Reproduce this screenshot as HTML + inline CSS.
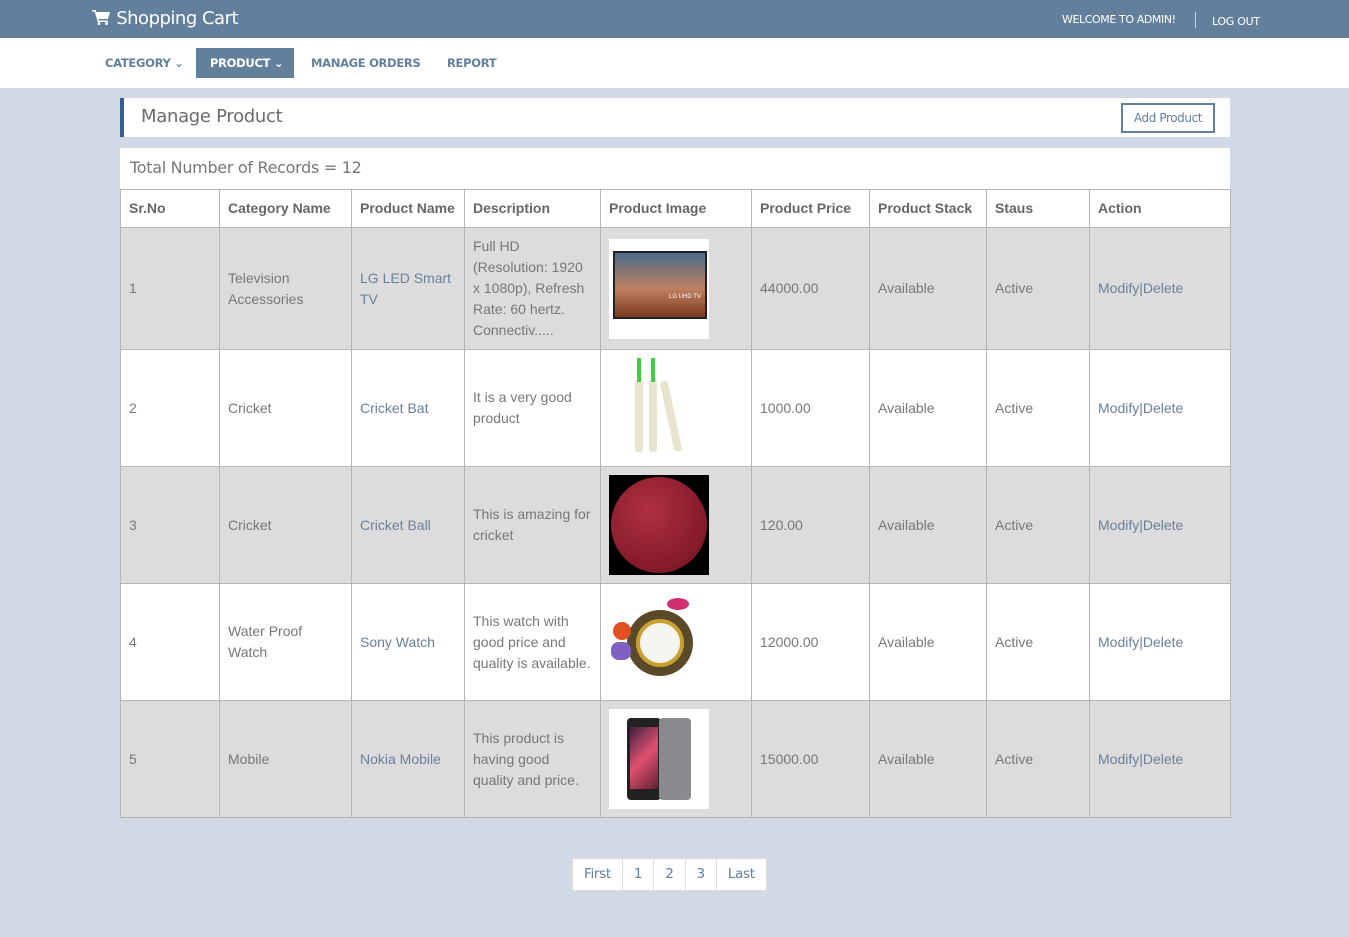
<!DOCTYPE html>
<html><head><meta charset="utf-8"><style>
*{margin:0;padding:0;box-sizing:border-box}
body{width:1349px;height:937px;background:#d3d8e7;font-family:"Liberation Sans",Arial,sans-serif;position:relative;overflow:hidden}
.top{position:absolute;left:0;top:0;width:1349px;height:38px;background:#62809c;color:#fff}
.brand{position:absolute;left:92px;top:8px;font-size:18px;font-family:"DejaVu Sans","Liberation Sans",sans-serif;letter-spacing:-0.5px}
.welc{position:absolute;left:1062px;top:13px;font-size:11px;font-family:"DejaVu Sans",sans-serif;letter-spacing:-0.4px}
.sep{position:absolute;left:1195px;top:12px;width:1px;height:16px;background:#c8d2dc}
.logout{position:absolute;left:1212px;top:15px;font-size:11px;font-family:"DejaVu Sans",sans-serif;letter-spacing:-0.3px}
.nav{position:absolute;left:0;top:38px;width:1349px;height:50px;background:#fff}
.nav span{position:absolute;top:18px;font-size:11.5px;font-weight:bold;color:#62809c;font-family:"DejaVu Sans",sans-serif;letter-spacing:-0.3px}
.nav .act{left:196px;top:10px;width:98px;height:30px;background:#62809c;color:#fff;padding:8px 0 0 14px}
.hd{position:absolute;left:120px;top:98px;width:1110px;height:39px;background:#fff;border-left:4px solid #2e5f90}
.hd h1{position:absolute;left:17px;top:8px;font-size:18px;font-weight:normal;color:#6b6b6b;font-family:"DejaVu Sans",sans-serif;letter-spacing:-0.3px}
.add{position:absolute;left:997px;top:5px;width:94px;height:30px;border:2px solid #62809c;color:#62809c;font-size:12px;text-align:center;line-height:26px;font-family:"DejaVu Sans",sans-serif;letter-spacing:-0.4px}
.tot{position:absolute;left:120px;top:148px;width:1110px;height:41px;background:#fff;color:#777;font-size:16px;padding:10px 0 0 10px;font-family:"DejaVu Sans",sans-serif;letter-spacing:-0.3px}
table{position:absolute;left:120px;top:189px;border-collapse:collapse;width:1110px;table-layout:fixed;font-size:14px;color:#777}
td,th{border:1px solid #b5b5b5;padding:0 8px;text-align:left;vertical-align:middle;line-height:21px}
th{height:38px;color:#666;font-weight:bold;background:#fff}
tr.g td{background:#dcdcdc}
tr.w td{background:#fff}
.b{color:#6a7f9a}
.img{width:100px;height:100px;position:relative;overflow:hidden}
.pg{position:absolute;left:572px;top:858px;height:33px;display:flex;background:#fff;border:1px solid #ddd}
.pg span{border-left:1px solid #ddd;padding:0 11px;line-height:31px;color:#62809c;font-size:13.5px;font-family:"DejaVu Sans",sans-serif;letter-spacing:-0.3px}
.pg span:first-child{border-left:0}
</style></head><body>
<div class="top">
<div class="brand"><svg width="19" height="16" viewBox="0 0 19 16" style="vertical-align:-1px"><path d="M0 1h3.5l1 2H18l-2 7H6.5l.5 1.5H16v1.5H5.8L2.6 2.5H0z" fill="#fff"/><circle cx="7" cy="14.5" r="1.5" fill="#fff"/><circle cx="14.5" cy="14.5" r="1.5" fill="#fff"/></svg> Shopping Cart</div>
<div class="welc">WELCOME TO ADMIN!</div><div class="sep"></div><div class="logout">LOG OUT</div>
</div>
<div class="nav">
<span style="left:105px">CATEGORY ⌄</span>
<span class="act">PRODUCT ⌄</span>
<span style="left:311px">MANAGE ORDERS</span>
<span style="left:447px">REPORT</span>
</div>
<div class="hd"><h1>Manage Product</h1><div class="add">Add Product</div></div>
<div class="tot">Total Number of Records = 12</div>
<table>
<colgroup><col style="width:99px"><col style="width:132px"><col style="width:113px"><col style="width:136px"><col style="width:151px"><col style="width:118px"><col style="width:117px"><col style="width:103px"><col style="width:141px"></colgroup>
<tr><th>Sr.No</th><th>Category Name</th><th>Product Name</th><th>Description</th><th>Product Image</th><th>Product Price</th><th>Product Stack</th><th>Staus</th><th>Action</th></tr>
<tr class="g" style="height:122px"><td>1</td><td>Television Accessories</td><td class="b">LG LED Smart TV</td><td>Full HD (Resolution: 1920 x 1080p), Refresh Rate: 60 hertz. Connectiv.....</td><td><div class="img" style="background:#fff"><div style="position:absolute;left:4px;top:12px;width:94px;height:68px;background:linear-gradient(#4a6b8a,#c08060 55%,#7a3a20);border:2px solid #222"></div><div style="position:absolute;left:60px;top:48px;font-size:6px;color:#fff">LG UHD TV</div></div></td><td>44000.00</td><td>Available</td><td>Active</td><td class="b">Modify|Delete</td></tr>
<tr class="w" style="height:117px"><td>2</td><td>Cricket</td><td class="b">Cricket Bat</td><td>It is a very good product</td><td><div class="img" style="background:#fff"><div style="position:absolute;left:26px;top:22px;width:8px;height:72px;background:#e8e4d0;border-radius:3px"></div><div style="position:absolute;left:40px;top:22px;width:8px;height:72px;background:#e8e4d0;border-radius:3px"></div><div style="position:absolute;left:28px;top:0;width:4px;height:24px;background:#4c4"></div><div style="position:absolute;left:42px;top:0;width:4px;height:24px;background:#4c4"></div><div style="position:absolute;left:58px;top:22px;width:8px;height:72px;background:#e8e4d0;border-radius:3px;transform:rotate(-12deg)"></div></div></td><td>1000.00</td><td>Available</td><td>Active</td><td class="b">Modify|Delete</td></tr>
<tr class="g" style="height:117px"><td>3</td><td>Cricket</td><td class="b">Cricket Ball</td><td>This is amazing for cricket</td><td><div class="img" style="background:#000"><div style="position:absolute;left:2px;top:2px;width:96px;height:96px;border-radius:50%;background:radial-gradient(circle at 40% 35%,#b03040,#701020)"></div></div></td><td>120.00</td><td>Available</td><td>Active</td><td class="b">Modify|Delete</td></tr>
<tr class="w" style="height:117px"><td>4</td><td>Water Proof Watch</td><td class="b">Sony Watch</td><td>This watch with good price and quality is available.</td><td><div class="img" style="background:#fff"><div style="position:absolute;left:18px;top:18px;width:66px;height:66px;border-radius:50%;background:#5a4a2a"></div><div style="position:absolute;left:27px;top:27px;width:48px;height:48px;border-radius:50%;background:#f4f4f0;border:4px solid #c9a030"></div><div style="position:absolute;left:4px;top:30px;width:18px;height:18px;border-radius:50%;background:#e05020"></div><div style="position:absolute;left:2px;top:50px;width:20px;height:18px;background:#8060c0;border-radius:40%"></div><div style="position:absolute;left:58px;top:6px;width:22px;height:12px;background:#d03070;border-radius:50%"></div></div></td><td>12000.00</td><td>Available</td><td>Active</td><td class="b">Modify|Delete</td></tr>
<tr class="g" style="height:117px"><td>5</td><td>Mobile</td><td class="b">Nokia Mobile</td><td>This product is having good quality and price.</td><td><div class="img" style="background:#fff"><div style="position:absolute;left:18px;top:9px;width:34px;height:82px;background:#222;border-radius:4px"></div><div style="position:absolute;left:21px;top:18px;width:28px;height:62px;background:linear-gradient(135deg,#402040,#e05070,#602030)"></div><div style="position:absolute;left:50px;top:9px;width:32px;height:82px;background:#8a8a8e;border-radius:4px"></div></div></td><td>15000.00</td><td>Available</td><td>Active</td><td class="b">Modify|Delete</td></tr>
</table>
<div class="pg"><span>First</span><span>1</span><span>2</span><span>3</span><span>Last</span></div>
</body></html>
